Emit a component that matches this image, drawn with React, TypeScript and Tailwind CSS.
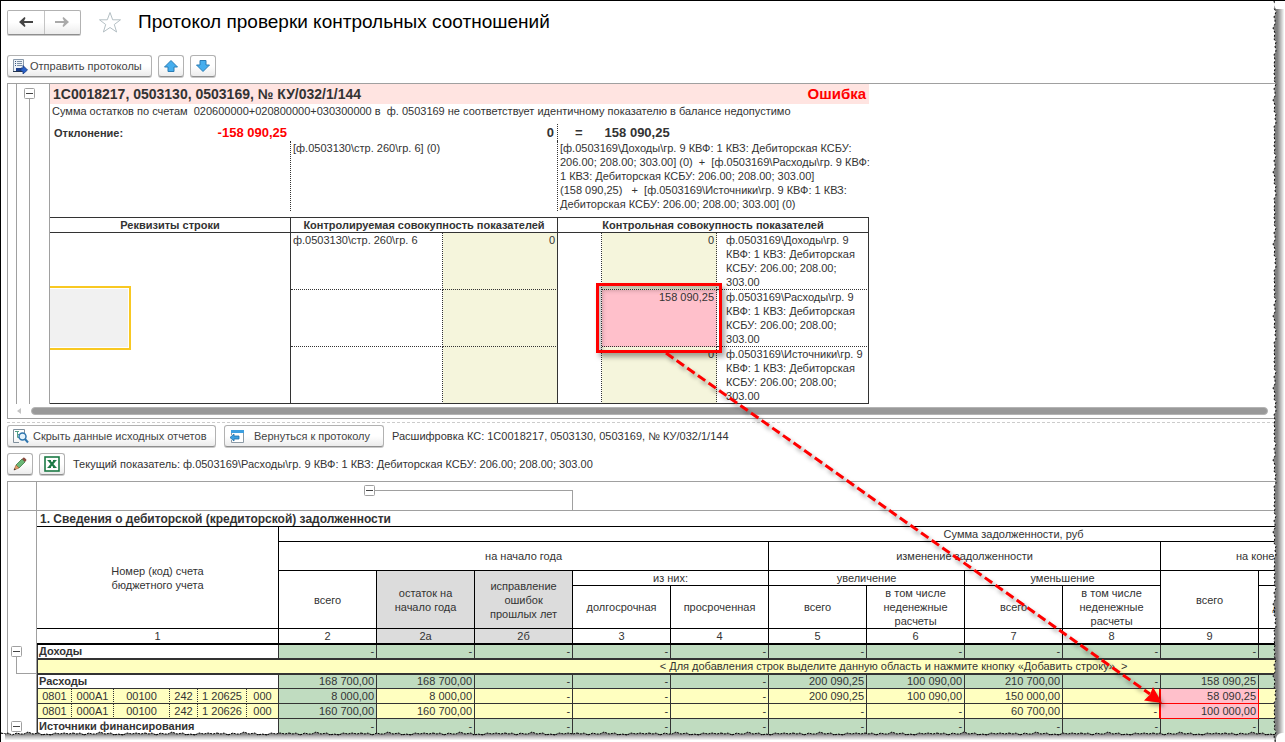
import React from 'react';
import clsx from 'clsx';

interface ToolButtonProps {
  label?: string;
  className?: string;
  children?: React.ReactNode;
}

const ToolButton: React.FC<ToolButtonProps> = ({ label, className, children }) => (
  <button
    type="button"
    aria-label={label}
    className={clsx(
      'flex h-[22px] shrink-0 items-center rounded-[3px] border border-[#b2b2b2] border-b-[#8f8f8f] bg-gradient-to-b from-white from-50% to-[#ececec] text-[#444] shadow-[0_1px_0_#c9c9c9]',
      className
    )}
  >
    {children}
  </button>
);

const Toggle: React.FC<{ className?: string }> = ({ className }) => (
  <button type="button" aria-label="Свернуть" className={clsx('block size-[11px] shrink-0', className)}>
    <svg width="11" height="11" viewBox="0 0 11 11" className="block">
      <rect x="0.5" y="0.5" width="10" height="10" rx="1" fill="#fff" stroke="#a0a0a0" />
      <path d="M2 5.5h7" stroke="#444" />
    </svg>
  </button>
);

const SendIcon = () => (
  <svg width="16" height="16" viewBox="0 0 16 16" className="block shrink-0">
    <path d="M1.5 1.5h10v12h-10z" fill="#eef3f8" stroke="#8a9aac" />
    <path d="M5 3.5h5M5 5.5h5M5 7.5h5" stroke="#7b8ea3" />
    <path d="M3 3.500h1M3 5.500h1M3 7.500h1" stroke="#3d5a86" />
    <path d="M4 10h5v4H4z" fill="#1d3f8c" />
    <path d="M9 10h2V7.500l4.500 4.500-4.500 4v-2.500H9z" fill="#2a62c8" stroke="#163a82" strokeWidth="0.800" />
    <path d="M1 13.500h9" stroke="#24344f" />
  </svg>
);

const ArrowBlock: React.FC<{ down?: boolean }> = ({ down }) => (
  <svg width="14" height="12" viewBox="0 0 14 12" className="block shrink-0">
    <path
      d={down ? 'M4 .5h6v4.500h3.500L7 11.500.5 5H4z' : 'M4 11.500h6V7h3.500L7 .5.5 7H4z'}
      fill="#45aeee"
      stroke="#2b7db5"
      strokeLinejoin="round"
    />
  </svg>
);

const SearchDocIcon = () => (
  <svg width="17" height="16" viewBox="0 0 17 16" className="block shrink-0">
    <path d="M7 14.500H1.500v-13h11V5" fill="none" stroke="#7f8f9c" />
    <path d="M3 3.500h4M5.500 4v5.500M5.500 6.500h3M5.500 9.500h2" stroke="#55a088" fill="none" />
    <circle cx="10.500" cy="8.500" r="3.500" fill="#e4f3fc" stroke="#2e75ae" strokeWidth="1.500" />
    <path d="M13 11l3 3.500" stroke="#2e75ae" strokeWidth="2" />
  </svg>
);

const ReturnIcon = () => (
  <svg width="16" height="15" viewBox="0 0 16 15" className="block shrink-0">
    <path d="M2.500 6V1.500h12v12h-12V11" fill="#fff" stroke="#8d9aa5" />
    <path d="M2 1h13v3H2z" fill="#3d9fe0" />
    <path d="M1 8.500L5 5v2h5v3H5v2z" fill="#3d9fe0" stroke="#1f6ea8" strokeWidth="0.800" strokeLinejoin="round" />
  </svg>
);

const PencilIcon = () => (
  <svg width="14" height="14" viewBox="0 0 14 14" className="block shrink-0">
    <path d="M3 8l6-6 3 3-6 6z" fill="#6cb877" stroke="#3d7a48" strokeWidth="0.800" />
    <path d="M9 2l1.200-1.200q.8-.6 1.600.1l1.300 1.300q.7.8 0 1.600L12 5z" fill="#8a4a3c" />
    <path d="M3 8l3 3-5 2z" fill="#e2a06a" stroke="#9a5b32" strokeWidth="0.600" />
    <path d="M.8 13.200l.8-2 1.300 1.300z" fill="#333" />
  </svg>
);

const ExcelIcon = () => (
  <svg width="16" height="16" viewBox="0 0 16 16" className="block shrink-0">
    <rect x="1" y="1" width="14" height="14" fill="#fff" stroke="#1c7a45" strokeWidth="1.600" />
    <path d="M5 4.500l6 7M11 4.500l-6 7" stroke="#1c7a45" strokeWidth="2.200" />
    <path d="M3.500 4.500h3.500M9 4.500h3.500M3.500 11.500h3.500M9 11.500h3.500" stroke="#1c7a45" />
  </svg>
);

const checkRows = [
  { left: 'ф.0503130\\стр. 260\\гр. 6', leftValue: '0', value: '0', name: 'Доходы' },
  { left: '', leftValue: '', value: '158 090,25', name: 'Расходы', failed: true },
  { left: '', leftValue: '', value: '0', name: 'Источники' },
];

const Protocol = () => (
  <section className="mt-[6px] border-t border-b border-l border-[#a0a0a0]">
    <div className="flex">
      <div className="flex w-[42px] shrink-0 border-r border-[#a0a0a0]">
        <div className="w-[9px] border-r border-[#a0a0a0]" />
        <div className="flex flex-col pt-1 pl-[7px]">
          <Toggle />
          <div className="ml-[5px] w-px grow bg-[#a0a0a0]" />
        </div>
      </div>
      <div className="relative w-[819px] shrink-0">
        <div className="flex h-5 items-center justify-between bg-[#ffe4e1] px-[3px] font-bold">
          <h2 className="text-[14px]">1С0018217, 0503130, 0503169, № КУ/032/1/144</h2>
          <span className="text-[15px] text-[#f00]">Ошибка</span>
        </div>
        <p className="mb-[6px] h-[14px] pl-[2px] whitespace-pre">
          {'Сумма остатков по счетам  020600000+020800000+030300000 в  ф. 0503169 не соответствует идентичному показателю в балансе недопустимо'}
        </p>
        <div className="grid grid-cols-[240px_268px_1fr] font-bold">
          <div className="flex h-[17px] items-center justify-between pr-[3px] pl-1">
            <span>Отклонение:</span>
            <span className="text-[13px] text-[#f00]">-158 090,25</span>
          </div>
          <div className="flex items-center justify-end border-r border-dotted border-[#333] pr-[3px] text-[13px]">0</div>
          <div className="flex items-center gap-[22px] pl-[17px] text-[13px]">
            <span>=</span>
            <span>158 090,25</span>
          </div>
        </div>
        <div className="mb-[6px] grid grid-cols-[240px_268px_1fr]">
          <div />
          <div className="border-x border-dotted border-[#333] pl-[2px]">[ф.0503130\стр. 260\гр. 6] (0)</div>
          <div className="pl-[2px] whitespace-pre">
            {'[ф.0503169\\Доходы\\гр. 9 КВФ: 1 КВЗ: Дебиторская КСБУ:\n206.00; 208.00; 303.00] (0)  +  [ф.0503169\\Расходы\\гр. 9 КВФ:\n1 КВЗ: Дебиторская КСБУ: 206.00; 208.00; 303.00]\n(158 090,25)   +  [ф.0503169\\Источники\\гр. 9 КВФ: 1 КВЗ:\nДебиторская КСБУ: 206.00; 208.00; 303.00] (0)'}
          </div>
        </div>
        <table className="w-full table-fixed border-separate border-spacing-0 border-t border-[#333]">
          <colgroup>
            <col className="w-[241px]" />
            <col className="w-[152px]" />
            <col className="w-[115px]" />
            <col className="w-[44px]" />
            <col className="w-[115px]" />
            <col className="w-[152px]" />
          </colgroup>
          <thead>
            <tr className="h-[15px] [&>th]:border-r [&>th]:border-b [&>th]:border-[#333]">
              <th>Реквизиты строки</th>
              <th colSpan={2}>Контролируемая совокупность показателей</th>
              <th colSpan={3}>Контрольная совокупность показателей</th>
            </tr>
          </thead>
          <tbody>
            {checkRows.map((row, i) => {
              const edge = i === checkRows.length - 1 ? 'border-b border-b-[#333]' : 'border-b border-b-[#333] [border-bottom-style:dotted]';
              return (
                <tr key={row.name} className="h-[57px] align-top">
                  {i === 0 && <td rowSpan={3} className="border-r border-b border-[#333]" />}
                  <td className={clsx(edge, 'border-r border-r-[#333] pl-[2px] [border-right-style:dotted]')}>{row.left}</td>
                  <td className={clsx(edge, 'border-r border-r-[#333] bg-[#f5f5dc] pr-[2px] text-right')}>{row.leftValue}</td>
                  {i === 0 && <td rowSpan={3} className="border-r border-b border-[#333] [border-right-style:dotted]" />}
                  <td
                    className={clsx(
                      edge,
                      'border-r border-r-[#333] pr-[2px] text-right [border-right-style:dotted]',
                      row.failed ? 'bg-[#ffc0cb]' : 'bg-[#f5f5dc]'
                    )}
                  >
                    {row.value}
                  </td>
                  <td className={clsx(edge, 'border-r border-r-[#333] pl-[9px] whitespace-pre')}>
                    {`ф.0503169\\${row.name}\\гр. 9\nКВФ: 1 КВЗ: Дебиторская\nКСБУ: 206.00; 208.00;\n303.00`}
                  </td>
                </tr>
              );
            })}
          </tbody>
        </table>
        {/* current cell */}
        <div className="absolute top-[202px] left-0 h-16 w-[81px] border-2 border-l-0 border-[#f8c822] bg-white pt-px pr-px pb-px">
          <div className="h-full bg-[#f1f1f1]" />
        </div>
        {/* failed value */}
        <div className="absolute top-[199px] left-[546px] h-[70px] w-[126px] border-3 border-[#f00] shadow-[3px_4px_5px_rgba(0,0,0,0.35),inset_3px_4px_5px_rgba(0,0,0,0.25)]" />
      </div>
    </div>
    <div className="flex h-[14px] items-center pr-[17px] pl-2">
      <svg width="6" height="6" viewBox="0 0 6 6" className="mr-[9px] block shrink-0">
        <path d="M5 0v6L1 3z" fill="#c4c4c4" />
      </svg>
      <div className="h-2 grow rounded-full border border-[#b4b4b4] bg-[#999]" />
    </div>
  </section>
);

type Tone = 'green' | 'yellow';

const tones: Record<Tone, string> = {
  green: 'bg-[#c0dcc0]',
  yellow: 'bg-[#ffffc0]',
};

const columnNumbers = ['2', '2а', '2б', '3', '4', '5', '6', '7', '8', '9', '10', '11', '12', '13', '14'];

const blank = ['-', '-', '-', '-', '-', '-', '-', '-', '-', '-', '', '', '', '', ''];
const expenses = ['168 700,00', '168 700,00', '-', '-', '-', '200 090,25', '100 090,00', '210 700,00', '-', '158 090,25', '', '', '', '', ''];

const accounts = [
  {
    code: ['0801', '000А1', '00100', '242', '1 20625', '000'],
    values: ['8 000,00', '8 000,00', '-', '-', '-', '200 090,25', '100 090,00', '150 000,00', '-', '58 090,25', '', '', '', '', ''],
  },
  {
    code: ['0801', '000А1', '00100', '242', '1 20626', '000'],
    values: ['160 700,00', '160 700,00', '-', '-', '-', '-', '-', '60 700,00', '-', '100 000,00', '', '', '', '', ''],
  },
];

const Values: React.FC<{ values: string[]; tone: Tone; marked?: boolean }> = ({ values, tone, marked }) => (
  <>
    {values.map((value, i) => (
      <td
        key={i}
        className={clsx(
          'border-r pr-[2px] text-right',
          i === 0 ? tones.green : marked && i === 9 ? 'bg-[#ffc0cb]' : tones[tone],
          marked && i === 9 && 'border-r-[#f00] border-b-[#f00]',
          marked && i === 8 && 'border-r-2 border-r-[#f00] border-b-[#333]',
          !(marked && (i === 8 || i === 9)) && 'border-r-[#333] border-b-[#333]'
        )}
      >
        {value}
      </td>
    ))}
  </>
);

const ReportTable = () => (
  <table className="w-[1712px] table-fixed border-separate border-spacing-0">
    <colgroup>
      <col className="w-[35px]" />
      <col className="w-[42px]" />
      <col className="w-[56px]" />
      <col className="w-[28px]" />
      <col className="w-[49px]" />
      <col className="w-[32px]" />
      {columnNumbers.map((n) => (
        <col key={n} className="w-[98px]" />
      ))}
    </colgroup>
    <thead className="[&_th]:border-r [&_th]:border-b [&_th]:border-black [&_th]:font-normal">
      <tr className="h-[15px]">
        <th colSpan={6} rowSpan={4}>
          Номер (код) счета
          <br />
          бюджетного учета
        </th>
        <th colSpan={15}>Сумма задолженности, руб</th>
      </tr>
      <tr className="h-[29px]">
        <th colSpan={5}>на начало года</th>
        <th colSpan={4}>изменение задолженности</th>
        <th colSpan={3}>на конец отчетного периода</th>
        <th colSpan={3} />
      </tr>
      <tr className="h-[15px]">
        <th rowSpan={2}>всего</th>
        <th rowSpan={2} className="bg-[#dcdcdc]">
          остаток на
          <br />
          начало года
        </th>
        <th rowSpan={2} className="bg-[#dcdcdc]">
          исправление
          <br />
          ошибок
          <br />
          прошлых лет
        </th>
        <th colSpan={2}>из них:</th>
        <th colSpan={2}>увеличение</th>
        <th colSpan={2}>уменьшение</th>
        <th rowSpan={2}>всего</th>
        <th colSpan={2} />
        <th rowSpan={2} />
        <th colSpan={2} />
      </tr>
      <tr className="h-[43px]">
        <th>долгосрочная</th>
        <th>просроченная</th>
        {['увеличение', 'уменьшение'].map((kind) => (
          <React.Fragment key={kind}>
            <th>всего</th>
            <th>
              в том числе
              <br />
              неденежные
              <br />
              расчеты
            </th>
          </React.Fragment>
        ))}
        <th>долгосрочная</th>
        <th />
        <th />
        <th />
      </tr>
      <tr className="h-4 [&>th]:border-b-2">
        <th colSpan={6}>1</th>
        {columnNumbers.map((n, i) => (
          <th key={n} className={clsx((n === '2а' || n === '2б') && 'bg-[#dcdcdc]')}>
            {i < 10 && n}
          </th>
        ))}
      </tr>
    </thead>
    <tbody className="leading-[13px]">
      <tr className="h-[15px] [&>*]:border-b-2 [&>*]:border-[#333]">
        <th colSpan={6} className="border-x pl-px text-left">Доходы</th>
        <Values values={blank} tone="green" />
      </tr>
      <tr className="h-[15px]">
        <td colSpan={21} className="border-b-2 border-l border-[#333] bg-[#ffffc0] text-center">
          &lt; Для добавления строк выделите данную область и нажмите кнопку «Добавить строку». &gt;
        </td>
      </tr>
      <tr className="h-[14px] [&>*]:border-b">
        <th colSpan={6} className="border-x border-[#333] pl-px text-left">Расходы</th>
        <Values values={expenses} tone="green" />
      </tr>
      {accounts.map((row) => (
        <tr key={row.code[4]} className="h-[15px] [&>*]:border-b">
          {row.code.map((part, i) => (
            <td
              key={i}
              className={clsx(
                'border-r border-[#333] bg-[#ffffc0] text-center',
                i === 0 && 'border-l',
                i < 5 && '[border-right-style:dotted]'
              )}
            >
              {part}
            </td>
          ))}
          <Values values={row.values} tone="yellow" marked />
        </tr>
      ))}
      <tr className="h-[16px] [&>*]:border-b">
        <th colSpan={6} className="border-x border-[#333] pl-px text-left">Источники финансирования</th>
        <Values values={blank} tone="green" />
      </tr>
    </tbody>
  </table>
);

const Report = () => (
  <section className="mt-[6px] flex flex-col border-t border-l border-[#a0a0a0]">
    <div className="flex h-[29px] border-b border-[#a0a0a0]">
      <div className="w-[29px] shrink-0 border-r border-[#a0a0a0]" />
      <div className="flex pt-[3px] pl-[327px]">
        <Toggle />
        <div className="mt-[5px] w-[198px] border-t border-r border-[#a0a0a0]" />
      </div>
    </div>
    <div className="flex">
      <div className="flex w-[29px] shrink-0 flex-col border-r border-[#a0a0a0] pt-[135px] pl-[3px]">
        <Toggle />
        <div className="ml-[5px] h-[17px] border-b border-l border-[#a0a0a0]" />
        <Toggle className="mt-[47px]" />
      </div>
      <div className="overflow-hidden">
        <h2 className="h-4 border-b border-black pl-[3px] text-[12px] leading-[16px] font-bold">
          1. Сведения о дебиторской (кредиторской) задолженности
        </h2>
        <ReportTable />
      </div>
    </div>
  </section>
);

const CalloutArrow = () => (
  <svg width="530" height="380" viewBox="0 0 530 380" className="pointer-events-none absolute top-[342px] left-[655px] drop-shadow-[3px_4px_2px_rgba(0,0,0,0.35)]">
    <path d="M10 10L494 351" stroke="#f00" strokeWidth="3" strokeDasharray="9 4" fill="none" />
    <path d="M506 360L488 357.500 494 351.500 497 344z" fill="#f00" />
  </svg>
);

const TornEdges = () => (
  <>
    <svg aria-hidden="true" width="100%" height="11" className="pointer-events-none absolute bottom-0 left-0 block">
      <defs>
        <linearGradient id="fadeDown" x1="0" y1="0" x2="0" y2="1">
          <stop offset="0.200" stopColor="#808080" />
          <stop offset="0.450" stopColor="#bbb" />
          <stop offset="0.850" stopColor="#fff" />
        </linearGradient>
        <pattern id="tearBottom" width="72" height="11" patternUnits="userSpaceOnUse">
          <path d="M0 2l4 1 3-1 4 2 5-2 3 1 4 0 4-2 5 2 6-1 3 2 4-1 5 1 4-2 5 1 4-1 5 1 4-1V11H0z" fill="url(#fadeDown)" />
          <path d="M0 2l4 1 3-1 4 2 5-2 3 1 4 0 4-2 5 2 6-1 3 2 4-1 5 1 4-2 5 1 4-1 5 1 4-1" fill="none" stroke="#000" strokeDasharray="2 1" />
        </pattern>
      </defs>
      <rect width="100%" height="11" fill="url(#tearBottom)" />
      <path d="M0 3h4v8H0z" fill="#fff" />
    </svg>
    <svg aria-hidden="true" width="13" height="100%" className="pointer-events-none absolute top-0 right-0 block">
      <defs>
        <linearGradient id="fadeRight" x1="0" y1="0" x2="1" y2="0">
          <stop offset="0.350" stopColor="#808080" />
          <stop offset="0.550" stopColor="#a8a8a8" />
          <stop offset="0.950" stopColor="#fff" />
        </linearGradient>
        <pattern id="tearRight" width="13" height="72" patternUnits="userSpaceOnUse">
          <path d="M2 0l1 4-1 3 2 4-2 5 1 3 0 4-2 4 2 5-1 6 2 3-1 4 1 5-2 4 1 5-1 4 1 5-1 4H13V0z" fill="url(#fadeRight)" />
          <path d="M2 0l1 4-1 3 2 4-2 5 1 3 0 4-2 4 2 5-1 6 2 3-1 4 1 5-2 4 1 5-1 4 1 5-1 4" fill="none" stroke="#000" strokeDasharray="2 2" />
        </pattern>
      </defs>
      <rect width="13" height="100%" fill="url(#tearRight)" />
      <path d="M3 0h10v8H4L2 5z" fill="#fff" />
    </svg>
    {/* outer corner stays clear of both shadows */}
    <div className="absolute right-0 bottom-0 size-[9px] rounded-tl-[6px] bg-white" />
  </>
);

export default function App() {
  return (
    <div className="relative h-screen overflow-hidden border-t border-l border-black bg-white font-['Liberation_Sans',Arial,sans-serif] text-[11px] leading-[14px] text-[#333]">
      <div className="pl-[6px]">
        <header className="flex h-[42px] items-center">
          <div className="flex h-[25px] w-[74px] rounded-[2px] border border-[#b2b2b2] border-b-[#8f8f8f] bg-gradient-to-b from-white from-50% to-[#ececec] shadow-[0_1px_0_#c9c9c9]">
            <button type="button" aria-label="Назад" className="flex flex-1 items-center justify-center border-r border-[#c4c4c4]">
              <svg width="14" height="10" viewBox="0 0 14 10">
                <path d="M14 5H3" stroke="#444" strokeWidth="2" fill="none" />
                <path d="M0 5L5.500 0 6.500 1 4.500 5l2 4-1 1z" fill="#444" />
              </svg>
            </button>
            <button type="button" aria-label="Вперед" className="flex flex-1 items-center justify-center">
              <svg width="14" height="10" viewBox="0 0 14 10">
                <path d="M0 5h11" stroke="#aaa" strokeWidth="2" fill="none" />
                <path d="M14 5L8.500 0l-1 1 2 4-2 4 1 1z" fill="#aaa" />
              </svg>
            </button>
          </div>
          <button type="button" aria-label="Добавить в избранное" className="ml-[17px]">
            <svg width="24" height="23" viewBox="0 0 24 23" className="block">
              <path d="M12 1.500l2.700 7.300h7.800l-6.200 4.700 2.300 7.500L12 16.500 5.400 21l2.300-7.500L1.500 8.800h7.800z" fill="#fff" stroke="#b4bfc4" />
            </svg>
          </button>
          <h1 className="ml-4 text-[19px] leading-6 text-black">Протокол проверки контрольных соотношений</h1>
        </header>

        <div className="mt-3 flex">
          <ToolButton className="w-[145px] gap-[2px] pl-1">
            <SendIcon />
            Отправить протоколы
          </ToolButton>
          <ToolButton label="Предыдущий" className="ml-[6px] w-[26px] justify-center">
            <ArrowBlock />
          </ToolButton>
          <ToolButton label="Следующий" className="ml-[6px] w-[26px] justify-center">
            <ArrowBlock down />
          </ToolButton>
        </div>

        <Protocol />

        <div className="mt-[3px] border-t border-dashed border-[#ccc]" />

        <div className="mt-[2px] flex items-center">
          <ToolButton className="w-[209px] gap-1 pl-1">
            <SearchDocIcon />
            Скрыть данные исходных отчетов
          </ToolButton>
          <ToolButton className="ml-2 w-[160px] gap-[9px] pl-1">
            <ReturnIcon />
            Вернуться к протоколу
          </ToolButton>
          <span className="ml-2">Расшифровка КС: 1С0018217, 0503130, 0503169, № КУ/032/1/144</span>
        </div>
        <div className="mt-[6px] flex items-center">
          <ToolButton label="Изменить" className="w-[26px] justify-center">
            <PencilIcon />
          </ToolButton>
          <ToolButton label="Выгрузить в Excel" className="ml-[6px] w-[26px] justify-center">
            <ExcelIcon />
          </ToolButton>
          <span className="ml-2">Текущий показатель: ф.0503169\Расходы\гр. 9 КВФ: 1 КВЗ: Дебиторская КСБУ: 206.00; 208.00; 303.00</span>
        </div>

        <Report />
      </div>

      <CalloutArrow />
      <TornEdges />
    </div>
  );
}
